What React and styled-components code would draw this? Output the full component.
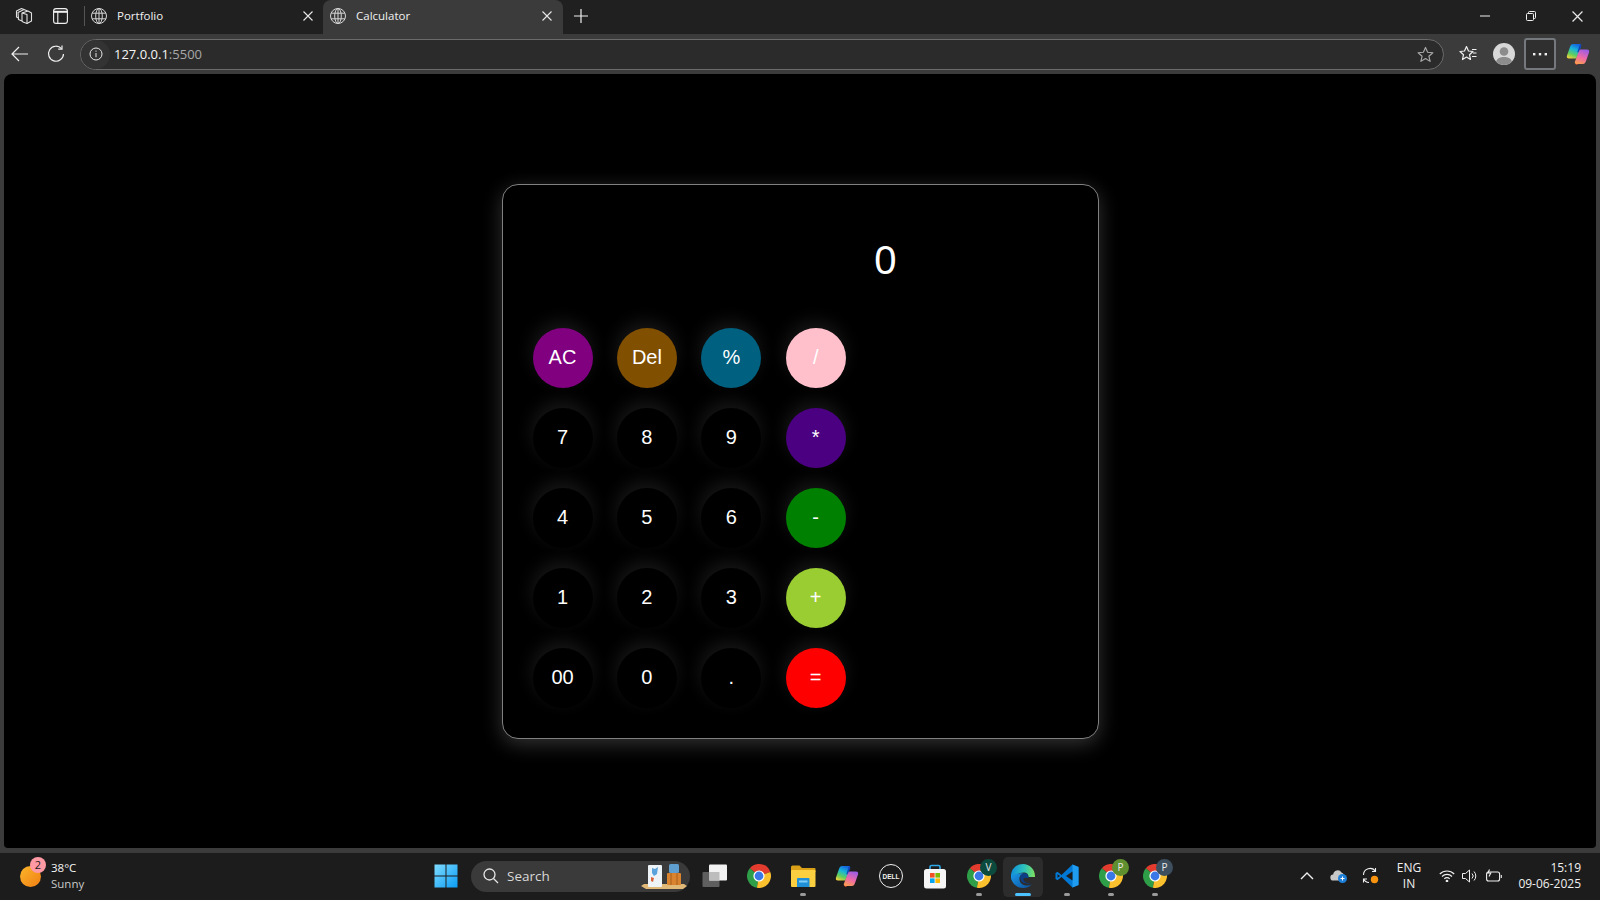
import React from "react";
import styled, { createGlobalStyle } from "styled-components";

const GlobalStyle = createGlobalStyle`
  html, body {
    margin: 0;
    padding: 0;
    background: #3b3b3b;
    overflow: hidden;
  }
  * {
    box-sizing: border-box;
  }
`;

const keys = [
  { label: "AC", bg: "#800080" },
  { label: "Del", bg: "#804f00" },
  { label: "%", bg: "#006080" },
  { label: "/", bg: "#ffc0cb" },
  { label: "7" },
  { label: "8" },
  { label: "9" },
  { label: "*", bg: "#4b0082" },
  { label: "4" },
  { label: "5" },
  { label: "6" },
  { label: "-", bg: "#008000" },
  { label: "1" },
  { label: "2" },
  { label: "3" },
  { label: "+", bg: "#9acd32" },
  { label: "00" },
  { label: "0" },
  { label: "." },
  { label: "=", bg: "#ff0000" },
];

function GlobeIcon() {
  return (
    <svg width="18" height="18" viewBox="0 0 18 18" fill="none" stroke="#d8d8d8" strokeWidth="1">
      <circle cx="9" cy="9" r="7.5" />
      <ellipse cx="9" cy="9" rx="3.3" ry="7.5" />
      <path d="M9 1.5v15M2.2 6.2h13.6M2.2 11.8h13.6" />
    </svg>
  );
}

function CloseIcon({ size = 10 }) {
  return (
    <svg width={size} height={size} viewBox="0 0 10 10" stroke="#e8e8e8" strokeWidth="1.1">
      <path d="M0.5 0.5l9 9M9.5 0.5l-9 9" />
    </svg>
  );
}

function ChromeIcon({ size = 24 }) {
  return (
    <svg width={size} height={size} viewBox="0 0 24 24">
      <path d="M12 12L23.28 7.9A12 12 0 0 0 2.81 4.29Z" fill="#e33b2e" />
      <path d="M12 12L2.81 4.29A12 12 0 0 0 9.92 23.82Z" fill="#2f9e48" />
      <path d="M12 12L9.92 23.82A12 12 0 0 0 23.28 7.9Z" fill="#fbc02d" />
      <circle cx="12" cy="12" r="5.6" fill="#fff" />
      <circle cx="12" cy="12" r="4.4" fill="#3b78e7" />
    </svg>
  );
}

function CopilotIcon({ id, size = 24 }) {
  return (
    <svg width={size} height={size} viewBox="0 0 24 24">
      <defs>
        <linearGradient id={`${id}Left`} x1="0.6" y1="0" x2="0.2" y2="1">
          <stop offset="0" stopColor="#1466e0" />
          <stop offset="0.35" stopColor="#19b6d8" />
          <stop offset="0.7" stopColor="#62cf5c" />
          <stop offset="1" stopColor="#f4d03a" />
        </linearGradient>
        <linearGradient id={`${id}Right`} x1="0.7" y1="0" x2="0.3" y2="1">
          <stop offset="0" stopColor="#9a5ce6" />
          <stop offset="0.55" stopColor="#ee6aa8" />
          <stop offset="1" stopColor="#f89a52" />
        </linearGradient>
      </defs>
      <path d="M10 17h4l-2 5c-.5 1-1.5 1-2.5.2Z" fill="#e5432f" />
      <path d="M7 2h6.5c1.5 0 2 1 1.6 2.2L11 15c-.4 1-1 1.5-2 1.5H3c-1.8 0-2.6-1.3-2-3L4 5c.6-2 1.5-3 3-3Z" fill={`url(#${id}Left)`} />
      <path d="M17 22h-6.5c-1.5 0-2-1-1.6-2.2L13 9c.4-1 1-1.5 2-1.5h6c1.8 0 2.6 1.3 2 3L20 19c-.6 2-1.5 3-3 3Z" fill={`url(#${id}Right)`} />
      <path d="M14 2.6c1.3.3 1.5 1 1.1 2L13 9c-.3.8-1 1.5-1.8 1.3Z" fill="#1240b8" />
    </svg>
  );
}

function WindowsIcon() {
  return (
    <svg width="24" height="24" viewBox="0 0 24 24">
      <defs>
        <linearGradient id="winGrad" x1="0" y1="0" x2="1" y2="1">
          <stop offset="0" stopColor="#7fdcff" />
          <stop offset="1" stopColor="#0a9cf5" />
        </linearGradient>
      </defs>
      <path d="M0.5 0.5h11v11h-11zM12.5 0.5h11v11h-11zM0.5 12.5h11v11h-11zM12.5 12.5h11v11h-11z" fill="url(#winGrad)" />
    </svg>
  );
}

function SearchArt() {
  return (
    <svg width="48" height="28" viewBox="0 0 48 28">
      <path d="M4 22h40l3 2-4 3H6l-5-3Z" fill="#e0b878" />
      <rect x="8" y="3" width="14" height="22" rx="1" fill="#eef3f8" />
      <path d="M12 6l3 1 3-2-1 7-3 2-2-3Z" fill="#5aa2dc" />
      <path d="M11 15l3 1-1 4-2-1Z" fill="#d9633b" />
      <rect x="27" y="11" width="14" height="12" rx="1" fill="#d9832f" />
      <rect x="29" y="2" width="10" height="9" rx="1.5" fill="#5f9fd0" />
      <path d="M31 11v12M37 11v12" stroke="#a85f1c" strokeWidth="1" />
    </svg>
  );
}

function TaskViewIcon() {
  return (
    <svg width="26" height="24" viewBox="0 0 26 24">
      <rect x="0.5" y="8" width="17" height="15" rx="1" fill="#5f5f5f" />
      <rect x="7" y="0.5" width="18" height="16" rx="1" fill="#f2f2f2" />
      <rect x="7" y="8" width="10.5" height="8.5" fill="#bdbdbd" />
    </svg>
  );
}

function FolderIcon() {
  return (
    <svg width="26" height="24" viewBox="0 0 26 24">
      <path d="M1 3a1.5 1.5 0 0 1 1.5-1.5h7L12 4h12.5A1 1 0 0 1 25.5 5v3H1Z" fill="#d9a018" />
      <rect x="1" y="6" width="24.5" height="17" rx="1" fill="#fbcf40" />
      <path d="M8 14h10.5a1 1 0 0 1 1 1v8H7v-8a1 1 0 0 1 1-1Z" fill="#1f8fd8" />
      <rect x="9" y="16.5" width="8.5" height="2" fill="#7fcdf5" />
    </svg>
  );
}

function DellIcon() {
  return (
    <DellRing>
      <DellText>DELL</DellText>
    </DellRing>
  );
}

function StoreIcon() {
  return (
    <svg width="24" height="25" viewBox="0 0 24 25">
      <path d="M7 6V3a1.5 1.5 0 0 1 1.5-1.5h7A1.5 1.5 0 0 1 17 3v3" fill="none" stroke="#2fa8e8" strokeWidth="1.6" />
      <rect x="1" y="5" width="22" height="19.5" rx="2.5" fill="#f5f5f5" />
      <rect x="7" y="9" width="4.6" height="4.6" fill="#f25022" />
      <rect x="12.4" y="9" width="4.6" height="4.6" fill="#7fba00" />
      <rect x="7" y="14.4" width="4.6" height="4.6" fill="#00a4ef" />
      <rect x="12.4" y="14.4" width="4.6" height="4.6" fill="#ffb900" />
    </svg>
  );
}

function EdgeIcon() {
  return (
    <svg width="24" height="24" viewBox="0 0 24 24">
      <defs>
        <linearGradient id="edgeTop" x1="0" y1="0.4" x2="1" y2="0.5">
          <stop offset="0" stopColor="#0f8fdc" />
          <stop offset="0.55" stopColor="#2fc4b8" />
          <stop offset="1" stopColor="#7ee05f" />
        </linearGradient>
        <linearGradient id="edgeBottom" x1="0" y1="0" x2="1" y2="1">
          <stop offset="0" stopColor="#1a9be8" />
          <stop offset="1" stopColor="#0b4f9e" />
        </linearGradient>
      </defs>
      <path d="M12 0C5.4 0 0 5.4 0 12c0 2 .5 3.8 1.5 5.5C3 11 8 8.5 12.5 8.5c3.500 0 5 2 5 4.500h6.400c.1-.5.1-.7.1-1C24 5.400 18.600 0 12 0Z" fill="url(#edgeTop)" />
      <path d="M0 12c0 6.600 5.400 12 12 12 3.300 0 6.500-1.300 8.700-3.600-3 1.500-7 1.600-9.700-.4-3-2.200-3.500-6.500-1-9 1-1 2-1.500 3-1.700C7.500 8.800 1.500 10 0 12Z" fill="url(#edgeBottom)" />
      <path d="M12.500 9.300c-2 .5-3.700 2.600-3.200 5.200.6 3.500 4 5.200 7 5.200 1.800 0 3.200-.4 4.400-1.200-2.500 1-5.700.6-7.200-1-1-1.100-1.200-2.500-.6-3.600H17.500c0-3-2-5-4.500-4.600Z" fill="#0d3f86" />
    </svg>
  );
}

function VsCodeIcon() {
  return (
    <svg width="24" height="24" viewBox="0 0 24 24">
      <path d="M17.5 0.5L23.5 3v18l-6 2.500L6.500 13l-4 3.200L0.500 15V9l2-1.200 4 3.200Z" fill="#0078d4" />
      <path d="M17.5 0.5L23.5 3v18l-6 2.500Z" fill="#1f9cf0" />
      <path d="M17.5 7.500L11 12l6.500 4.500Z" fill="#1c1c1c" />
      <path d="M2.500 10.200L5.200 12 2.500 13.800Z" fill="#1c1c1c" />
    </svg>
  );
}

function App() {
  return (
    <Screen>
      <GlobalStyle />
      <TabStrip>
        <StripIcon>
          <svg width="18" height="18" viewBox="0 0 18 18" fill="none" stroke="#e0e0e0" strokeWidth="1.1" strokeLinejoin="round">
            <path d="M7 6l6-2 3.500 2v8l-4.500 2.500-4-1.500a1.500 1.500 0 0 1-1-1.400Z" />
            <path d="M7 14L3.500 12.500 3 5.500 9 2.500l3.500 1.500" />
            <path d="M3.500 11L1.500 10 1.500 4 6.500 1.500l2.500 1" />
            <path d="M12 16.500V7.500L7 6" />
          </svg>
        </StripIcon>
        <StripIcon>
          <svg width="15" height="16" viewBox="0 0 15 16" fill="none" stroke="#f0f0f0" strokeWidth="1.1">
            <rect x="0.6" y="0.6" width="13.8" height="14.8" rx="2.5" />
            <path d="M0.6 3.800h13.8" strokeWidth="2" />
            <path d="M4.800 4v11.400" />
          </svg>
        </StripIcon>
        <TabDivider />
        <Tab>
          <GlobeIcon />
          <TabTitle>Portfolio</TabTitle>
          <CloseIcon />
        </Tab>
        <Tab $active>
          <GlobeIcon />
          <TabTitle>Calculator</TabTitle>
          <CloseIcon />
        </Tab>
        <NewTab>
          <svg width="14" height="14" viewBox="0 0 14 14" stroke="#f0f0f0" strokeWidth="1.2">
            <path d="M7 0v14M0 7h14" />
          </svg>
        </NewTab>
        <WindowButtons>
          <WindowButton>
            <svg width="10" height="10" viewBox="0 0 10 10" stroke="#f0f0f0" strokeWidth="1">
              <path d="M0 5h10" />
            </svg>
          </WindowButton>
          <WindowButton>
            <svg width="10" height="10" viewBox="0 0 10 10" fill="none" stroke="#f0f0f0" strokeWidth="1">
              <rect x="0.5" y="2.500" width="7" height="7" rx="1" />
              <path d="M2.500 2.500V1.500a1 1 0 0 1 1-1h5a1 1 0 0 1 1 1v5a1 1 0 0 1-1 1h-1" />
            </svg>
          </WindowButton>
          <WindowButton>
            <CloseIcon size={11} />
          </WindowButton>
        </WindowButtons>
      </TabStrip>

      <Toolbar>
        <ToolButton>
          <svg width="18" height="16" viewBox="0 0 18 16" fill="none" stroke="#f0f0f0" strokeWidth="1.2">
            <path d="M17 8H1M8 1L1 8l7 7" />
          </svg>
        </ToolButton>
        <ToolButton>
          <svg width="18" height="18" viewBox="0 0 18 18" fill="none" stroke="#f0f0f0" strokeWidth="1.2">
            <path d="M14.500 3.600A7.500 7.500 0 1 0 16.500 9" />
            <path d="M15 0.500v3.600h-3.800" />
          </svg>
        </ToolButton>
        <AddressBar>
          <InfoBadge>
            <svg width="14" height="14" viewBox="0 0 14 14" fill="none" stroke="#e8e8e8" strokeWidth="1">
              <circle cx="7" cy="7" r="6" />
              <path d="M7 6v4.200M7 3.600v1.100" />
            </svg>
          </InfoBadge>
          <Url>
            127.0.0.1<UrlPort>:5500</UrlPort>
          </Url>
          <StarSlot>
            <svg width="17" height="17" viewBox="0 0 24 24" fill="none" stroke="#aaa" strokeWidth="1.6" strokeLinejoin="round">
              <path d="M12 2l3 6.800 7.400.7-5.600 4.900 1.700 7.300L12 17.800 5.500 21.700l1.700-7.300L1.600 9.500 9 8.800Z" />
            </svg>
          </StarSlot>
        </AddressBar>
        <ToolIcons>
          <ToolIcon>
            <svg width="18" height="18" viewBox="0 0 18 18" fill="none" stroke="#f0f0f0" strokeWidth="1.2" strokeLinejoin="round">
              <path d="M7.500 1.500l2 4.500 4.500.5-3.500 3.200 1 4.800-4-2.500-4 2.500 1-4.800L1 6.500l4.500-.5Z" />
              <path d="M13 4.500h4.500M14 8h3.500M13 11.500h4.500" />
            </svg>
          </ToolIcon>
          <ToolIcon>
            <Avatar>
              <svg width="22" height="22" viewBox="0 0 22 22">
                <circle cx="11" cy="8.500" r="4.300" fill="#8c8c8c" />
                <path d="M3 18.500c1.500-3.500 4.500-4.500 8-4.500s6.500 1 8 4.500A11 11 0 0 1 11 22a11 11 0 0 1-8-3.500Z" fill="#8c8c8c" />
              </svg>
            </Avatar>
          </ToolIcon>
          <MoreButton>
            <svg width="14" height="4" viewBox="0 0 14 4" fill="#f0f0f0">
              <rect x="0" y="1" width="2.4" height="2.4" />
              <rect x="5.8" y="1" width="2.4" height="2.4" />
              <rect x="11.6" y="1" width="2.4" height="2.4" />
            </svg>
          </MoreButton>
          <CopilotSlot>
            <CopilotIcon id="copilotBar" />
          </CopilotSlot>
        </ToolIcons>
      </Toolbar>

      <Page>
        <Calculator>
          <Display>0</Display>
          <Keypad>
            {keys.map((key) => (
              <Key key={key.label} $bg={key.bg}>
                {key.label}
              </Key>
            ))}
          </Keypad>
        </Calculator>
      </Page>

      <Taskbar>
        <Weather>
          <Sun>
            <SunBadge>2</SunBadge>
          </Sun>
          <WeatherText>
            <Temp>38°C</Temp>
            <Condition>Sunny</Condition>
          </WeatherText>
        </Weather>
        <AppSlot>
          <WindowsIcon />
        </AppSlot>
        <SearchBox>
          <svg width="16" height="16" viewBox="0 0 16 16" fill="none" stroke="#e6e6e6" strokeWidth="1.3">
            <circle cx="6.500" cy="6.500" r="5.500" />
            <path d="M10.500 10.500L15 15" />
          </svg>
          <SearchLabel>Search</SearchLabel>
          <SearchArt />
        </SearchBox>
        <AppSlot>
          <TaskViewIcon />
        </AppSlot>
        <AppSlot>
          <ChromeIcon />
        </AppSlot>
        <AppSlot $running>
          <FolderIcon />
        </AppSlot>
        <AppSlot>
          <CopilotIcon id="copilotTask" />
        </AppSlot>
        <AppSlot>
          <DellIcon />
        </AppSlot>
        <AppSlot>
          <StoreIcon />
        </AppSlot>
        <AppSlot $running>
          <ChromeIcon />
          <ProfileBadge $bg="#0c4a3e">V</ProfileBadge>
        </AppSlot>
        <AppSlot $active>
          <EdgeIcon />
        </AppSlot>
        <AppSlot $running>
          <VsCodeIcon />
        </AppSlot>
        <AppSlot $running>
          <ChromeIcon />
          <ProfileBadge $bg="#5f8f2f">P</ProfileBadge>
        </AppSlot>
        <AppSlot $running>
          <ChromeIcon />
          <ProfileBadge $bg="#3d4f5f">P</ProfileBadge>
        </AppSlot>

        <Tray>
          <TrayIcon $width={24}>
            <svg width="14" height="8" viewBox="0 0 14 8" fill="none" stroke="#f0f0f0" strokeWidth="1.4">
              <path d="M1 7l6-6 6 6" />
            </svg>
          </TrayIcon>
          <TrayIcon $width={40}>
            <svg width="18" height="16" viewBox="0 0 18 16">
              <path d="M3.500 12.500a3 3 0 0 1-.3-6A4.500 4.500 0 0 1 11.500 4.500 3 3 0 0 1 13 9.500v3Z" fill="#c8c8c8" />
              <circle cx="12.500" cy="10.500" r="4.500" fill="#1d7fd8" />
              <path d="M10.500 10.500h4M12.500 8.500v4" stroke="#fff" strokeWidth="1" />
            </svg>
          </TrayIcon>
          <TrayIcon $width={24}>
            <svg width="18" height="18" viewBox="0 0 18 18" fill="none" stroke="#f0f0f0" strokeWidth="1.1">
              <path d="M1.500 8A6.500 6.500 0 0 1 13.500 4.500M13.500 1v3.500H10" />
              <path d="M7 15.500A6.500 6.500 0 0 1 1.500 12M1.500 15.500V12H5" />
              <circle cx="12.500" cy="12.500" r="3.700" fill="#f7930e" stroke="none" />
            </svg>
          </TrayIcon>
          <Language>
            <span>ENG</span>
            <span>IN</span>
          </Language>
          <TrayIcon $width={24}>
            <svg width="16" height="12" viewBox="0 0 16 12" fill="none" stroke="#f0f0f0" strokeWidth="1.1">
              <path d="M0.800 4a10 10 0 0 1 14.400 0M3 6.500a7 7 0 0 1 10 0M5.300 8.800a3.600 3.600 0 0 1 5.400 0" />
              <circle cx="8" cy="11" r="0.800" fill="#f0f0f0" />
            </svg>
          </TrayIcon>
          <TrayIcon $width={22}>
            <svg width="16" height="14" viewBox="0 0 16 14" fill="none" stroke="#f0f0f0" strokeWidth="1">
              <path d="M0.500 4.500h3l4-3.500v12l-4-3.500h-3Z" />
              <path d="M10 4.500a3.500 3.500 0 0 1 0 5M12 2.500a6.500 6.500 0 0 1 0 9" />
            </svg>
          </TrayIcon>
          <TrayIcon $width={26}>
            <svg width="16" height="13" viewBox="0 0 16 13" fill="none" stroke="#f0f0f0" strokeWidth="1.1">
              <rect x="0.600" y="3" width="13" height="9" rx="2" />
              <path d="M15.300 6v3" />
              <path d="M3.500 0.500L1.800 4h3L3 7.500" />
            </svg>
          </TrayIcon>
          <Clock>
            <span>15:19</span>
            <span>09-06-2025</span>
          </Clock>
        </Tray>
      </Taskbar>
    </Screen>
  );
}

export default App;

const uiFont = `"Open Sans", "Noto Sans", sans-serif`;

const Screen = styled.div`
  display: flex;
  flex-direction: column;
  width: 1600px;
  height: 900px;
  background: #3b3b3b;
  font-family: ${uiFont};
  overflow: hidden;
`;

const TabStrip = styled.div`
  display: flex;
  align-items: stretch;
  height: 34px;
  background: #202020;
  padding-left: 6px;
`;

const StripIcon = styled.div`
  display: flex;
  align-items: center;
  justify-content: center;
  width: 36px;
  padding-bottom: 2px;
`;

const TabDivider = styled.div`
  width: 1px;
  height: 20px;
  margin: 6px 5px 0 6px;
  background: #555;
`;

const Tab = styled.div`
  display: flex;
  align-items: center;
  gap: 8px;
  width: ${(p) => (p.$active ? "240px" : "233px")};
  padding: 0 ${(p) => (p.$active ? "11px" : "10px")} 3px ${(p) => (p.$active ? "6px" : "0")};
  color: #f0f0f0;
  background: ${(p) => (p.$active ? "#3b3b3b" : "transparent")};
  border-radius: ${(p) => (p.$active ? "8px 8px 0 0" : "0")};
`;

const TabTitle = styled.span`
  flex: 1;
  font-size: 11.5px;
  padding-left: 1px;
`;

const NewTab = styled.div`
  display: flex;
  align-items: center;
  justify-content: center;
  width: 36px;
  padding-bottom: 2px;
`;

const WindowButtons = styled.div`
  display: flex;
  margin-left: auto;
`;

const WindowButton = styled.div`
  display: flex;
  align-items: center;
  justify-content: center;
  width: 46px;
  padding-bottom: 2px;
`;

const Toolbar = styled.div`
  display: flex;
  align-items: center;
  height: 40px;
  padding: 0 4px 0 2px;
  background: #3b3b3b;
`;

const ToolButton = styled.div`
  display: flex;
  align-items: center;
  justify-content: center;
  width: 36px;
  height: 31px;
`;

const AddressBar = styled.div`
  display: flex;
  align-items: center;
  width: 1364px;
  height: 31px;
  margin-left: 6px;
  border: 1px solid #6b6b6b;
  border-radius: 16px;
  background: #2b2b2b;
`;

const InfoBadge = styled.div`
  display: flex;
  align-items: center;
  justify-content: center;
  width: 29px;
  height: 29px;
  border-radius: 50%;
  background: #333;
`;

const Url = styled.div`
  margin-left: 4px;
  color: #f5f5f5;
  font-size: 13px;
`;

const UrlPort = styled.span`
  color: #a8a8a8;
`;

const StarSlot = styled.div`
  display: flex;
  margin-left: auto;
  padding-right: 9px;
`;

const ToolIcons = styled.div`
  display: flex;
  align-items: center;
  margin-left: 6px;
`;

const ToolIcon = styled.div`
  display: flex;
  align-items: center;
  justify-content: center;
  width: 36px;
  height: 31px;
`;

const CopilotSlot = styled(ToolIcon)`
  margin-left: 4px;
`;

const Avatar = styled.div`
  width: 22px;
  height: 22px;
  border-radius: 50%;
  background: #d8d8d8;
  overflow: hidden;
`;

const MoreButton = styled.div`
  display: flex;
  align-items: center;
  justify-content: center;
  width: 32px;
  height: 32px;
  margin-left: 2px;
  border: 2px solid #75797e;
  border-radius: 3px;
  background: #2f2f2f;
`;

const Page = styled.main`
  flex: 1;
  display: flex;
  justify-content: center;
  align-items: flex-start;
  margin: 0 4px 5px 4px;
  padding-top: 110px;
  background: #000;
  border-radius: 8px 8px 4px 4px;
`;

const Calculator = styled.section`
  width: 597px;
  height: 555px;
  padding: 0 30px;
  border: 1px solid #808080;
  border-radius: 16px;
  background: #000;
  box-shadow: 0 5px 20px rgba(255, 255, 255, 0.2);
  font-family: "Liberation Sans", Arial, sans-serif;
`;

const Display = styled.div`
  width: 364px;
  height: 143px;
  padding-top: 52px;
  color: #fff;
  font-size: 40px;
  line-height: 46px;
  text-align: right;
`;

const Keypad = styled.div`
  display: grid;
  grid-template-columns: repeat(4, 60px);
  grid-auto-rows: 60px;
  column-gap: 24.4px;
  row-gap: 20px;
`;

const Key = styled.button`
  width: 60px;
  height: 60px;
  padding: 0 0 2px;
  border: none;
  border-radius: 50%;
  background: ${(p) => p.$bg || "#000"};
  color: #fff;
  font-family: inherit;
  font-size: 20px;
  box-shadow: -1px -7px 18px rgba(255, 255, 255, 0.09);
`;

const Taskbar = styled.footer`
  display: flex;
  align-items: center;
  height: 47px;
  flex-shrink: 0;
  background: #1c1c1c;
  color: #f0f0f0;
`;

const Weather = styled.div`
  display: flex;
  align-items: center;
  width: 424px;
  padding: 0 0 2px 20px;
  gap: 10px;
`;

const Sun = styled.div`
  position: relative;
  width: 21px;
  height: 21px;
  margin-top: 2px;
  border-radius: 50%;
  background: linear-gradient(135deg, #fbb62c, #f07f12);
`;

const SunBadge = styled.span`
  position: absolute;
  top: -9px;
  right: -5px;
  width: 16px;
  height: 16px;
  border-radius: 50%;
  background: #ff99a4;
  color: #1c1c1c;
  font-size: 11px;
  line-height: 16px;
  text-align: center;
`;

const WeatherText = styled.div`
  display: flex;
  flex-direction: column;
  font-size: 11.5px;
  line-height: 16px;
`;

const Temp = styled.span`
  color: #f5f5f5;
`;

const Condition = styled.span`
  color: #c8c8c8;
`;

const AppSlot = styled.div`
  position: relative;
  display: flex;
  align-items: center;
  justify-content: center;
  width: 44px;
  height: 40px;
  padding-bottom: 1px;
  border-left: 2px solid transparent;
  border-right: 2px solid transparent;
  border-radius: 6px;
  background: ${(p) => (p.$active ? "#2c2c2c" : "transparent")};
  background-clip: padding-box;

  &::after {
    content: "";
    display: ${(p) => (p.$running || p.$active ? "block" : "none")};
    position: absolute;
    bottom: 1px;
    left: 50%;
    transform: translateX(-50%);
    width: ${(p) => (p.$active ? "16px" : "6px")};
    height: 3px;
    border-radius: 2px;
    background: ${(p) => (p.$active ? "#4cc2ff" : "#9a9a9a")};
  }
`;

const SearchBox = styled.div`
  display: flex;
  align-items: center;
  width: 219px;
  height: 31px;
  margin: 0 3px 1px 3px;
  padding: 0 2px 0 12px;
  border-radius: 16px;
  background: #3a3a3a;
`;

const SearchLabel = styled.span`
  flex: 1;
  margin-left: 8px;
  color: #d8d8d8;
  font-size: 13.5px;
`;

const DellRing = styled.div`
  display: flex;
  align-items: center;
  justify-content: center;
  width: 24px;
  height: 24px;
  border: 1.5px solid #f0f0f0;
  border-radius: 50%;
`;

const DellText = styled.span`
  color: #f0f0f0;
  font-family: "Liberation Sans", Arial, sans-serif;
  font-size: 6.5px;
  font-weight: 700;
`;

const ProfileBadge = styled.span`
  position: absolute;
  top: 2px;
  right: 2px;
  width: 17px;
  height: 17px;
  border-radius: 50%;
  background: ${(p) => p.$bg};
  color: #e8e8e8;
  font-size: 10px;
  line-height: 17px;
  text-align: center;
`;

const Tray = styled.div`
  display: flex;
  align-items: center;
  margin-left: auto;
  padding: 0 19px 2px 0;
`;

const TrayIcon = styled.div`
  display: flex;
  align-items: center;
  justify-content: center;
  width: ${(p) => p.$width}px;
`;

const Language = styled.div`
  display: flex;
  flex-direction: column;
  align-items: center;
  width: 52px;
  font-size: 12px;
  line-height: 16px;
`;

const Clock = styled.div`
  display: flex;
  flex-direction: column;
  align-items: flex-end;
  width: 74px;
  font-size: 12px;
  line-height: 16px;
`;
